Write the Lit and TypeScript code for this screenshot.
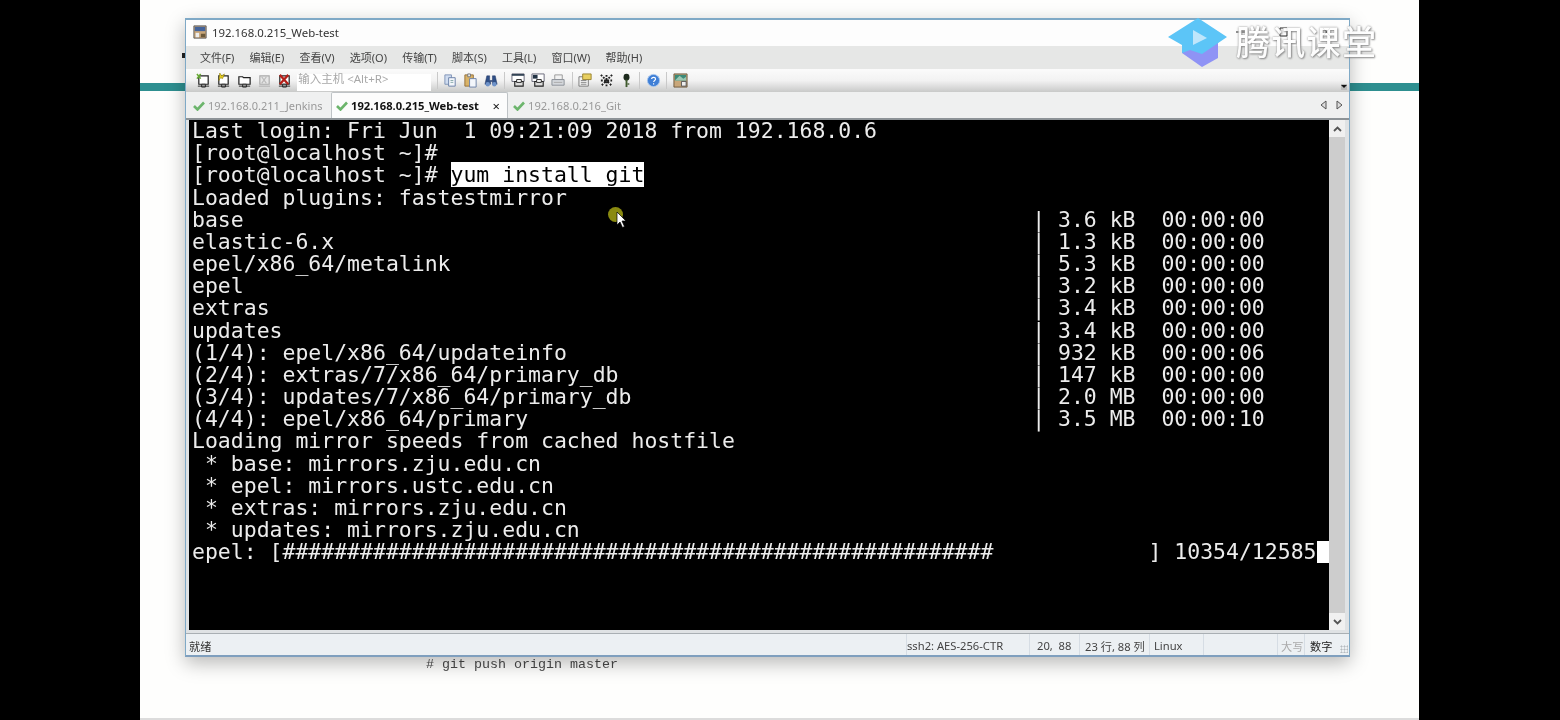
import { LitElement, html, css, svg } from "lit";
import { customElement } from "lit/decorators.js";

const ICONS: Record<string, unknown> = {
  connect: svg`<path d="M3 3h10v9H3z" fill="#fff" stroke="#222" stroke-width="1.3"/><path d="M1 1l4 5M5 1L1 6" stroke="#6a3" stroke-width="1.6"/><path d="M6 12h4v3H6z" fill="#ddd" stroke="#222"/><path d="M2 14h12" stroke="#222"/>`,
  quick: svg`<path d="M3 3h10v9H3z" fill="#fff" stroke="#222" stroke-width="1.3"/><path d="M4 0l2 3 3-2-2 5-2-1-2 3z" fill="#e8cf20" stroke="#8a7a10" stroke-width=".6"/><path d="M6 12h4v3H6z" fill="#ddd" stroke="#222"/><path d="M2 14h12" stroke="#222"/>`,
  folder: svg`<path d="M2 4h4l1 1h7v7H2z" fill="#fff" stroke="#222" stroke-width="1.3"/><path d="M6 12h4v3H6z" fill="#ddd" stroke="#222"/><path d="M2 14h12" stroke="#222"/>`,
  ghost: svg`<path d="M3 3h10v9H3z" fill="#e6e6e6" stroke="#aaa" stroke-width="1.2"/><path d="M5 4l5 7M10 4L5 11" stroke="#bbb" stroke-width="1.3"/><path d="M2 14h12" stroke="#aaa"/>`,
  close: svg`<path d="M3 3h10v9H3z" fill="#fff" stroke="#222" stroke-width="1.3"/><path d="M3 2l9 10M12 2L3 12" stroke="#b5201a" stroke-width="2.4"/><path d="M6 12h4v3H6z" fill="#ddd" stroke="#222"/><path d="M2 14h12" stroke="#222"/>`,
  copy: svg`<path d="M2 2h7v10H2z" fill="#cfdcf0" stroke="#7f93b5"/><path d="M6 5h7v9H6z" fill="#f3f6fb" stroke="#6a80a8"/><path d="M8 8h3M8 10h3" stroke="#8aa"/>`,
  paste: svg`<path d="M2 2h9v12H2z" fill="#d9b368" stroke="#94703a"/><path d="M5 1h3v3H5z" fill="#eee" stroke="#777"/><path d="M7 6h7v9H7z" fill="#f3f6fb" stroke="#6a80a8"/>`,
  find: svg`<path d="M3 3h3v5h3V3h3l2 9h-5V9H7v3H1z" fill="#2f4f86" stroke="#1d3260" stroke-width=".5"/><circle cx="4" cy="12" r="2.4" fill="#6f93c9"/><circle cx="11" cy="12" r="2.4" fill="#6f93c9"/>`,
  print1: svg`<path d="M1 1h13v8H1z" fill="#fff" stroke="#667"/><path d="M1 1h13v2H1z" fill="#345"/><path d="M4 9h9v5H4z" fill="#ddd" stroke="#222" stroke-width="1.2"/><path d="M6 7h5v3H6z" fill="#fff" stroke="#222"/>`,
  print2: svg`<path d="M1 1h13v8H1z" fill="#fff" stroke="#667"/><path d="M2 2h5v4H2z" fill="#234"/><path d="M4 9h9v5H4z" fill="#ddd" stroke="#222" stroke-width="1.2"/><path d="M6 7h5v3H6z" fill="#fff" stroke="#222"/>`,
  print3: svg`<path d="M4 2h8v5H4z" fill="#f2f2f2" stroke="#999"/><path d="M1 7h13v6H1z" fill="#d5d8dc" stroke="#8a8f96"/><path d="M3 10h9" stroke="#aaa"/>`,
  options: svg`<path d="M1 4h10v10H1z" fill="#f3f3f3" stroke="#777"/><path d="M5 1h9v6H5z" fill="#e8cf60" stroke="#9a8330"/><path d="M3 8h6M3 10h6M3 12h6" stroke="#888"/>`,
  map: svg`<path d="M2 2h12v12H2z" fill="#eee"/><path d="M2 2l12 12M14 2L2 14M8 2v12M2 8h12" stroke="#222" stroke-width="2" stroke-dasharray="2 1.4"/>`,
  key: svg`<ellipse cx="8" cy="4.5" rx="3.2" ry="3.6" fill="#1d2a1d"/><path d="M7 7h2v8H7z" fill="#3f5a2d"/><path d="M9 11h2v1.500H9z" fill="#3f5a2d"/>`,
  help: svg`<circle cx="8" cy="8" r="6.500" fill="#3f7fd6" stroke="#a9c8ef"/><path d="M6 6.500c0-2.500 4.200-2.500 4.200 0 0 1.500-2 1.500-2 3M8.100 11v1.200" stroke="#fff" stroke-width="1.200" fill="none"/>`,
  lock: svg`<path d="M1 1h14v14H1z" fill="#c9a77a" stroke="#6f5a3e"/><path d="M2 2h12v6H2z" fill="#3c8a78"/><path d="M2 8l5-5 4 3 3-2v4z" fill="#9cc7b2"/><path d="M9 9h5v5H9z" fill="#eee" stroke="#555"/>`,
};

const toolbarGroups = [
  ["copy", "paste", "find"],
  ["print1", "print2", "print3"],
  ["options", "map", "key"],
  ["help"],
  ["lock"],
];

const stats: [string, string, string][] = [
  ["base", "3.6 kB", "00:00:00"],
  ["elastic-6.x", "1.3 kB", "00:00:00"],
  ["epel/x86_64/metalink", "5.3 kB", "00:00:00"],
  ["epel", "3.2 kB", "00:00:00"],
  ["extras", "3.4 kB", "00:00:00"],
  ["updates", "3.4 kB", "00:00:00"],
  ["(1/4): epel/x86_64/updateinfo", "932 kB", "00:00:06"],
  ["(2/4): extras/7/x86_64/primary_db", "147 kB", "00:00:00"],
  ["(3/4): updates/7/x86_64/primary_db", "2.0 MB", "00:00:00"],
  ["(4/4): epel/x86_64/primary", "3.5 MB", "00:00:10"],
];

const menus = ["文件(F)", "编辑(E)", "查看(V)", "选项(O)", "传输(T)", "脚本(S)", "工具(L)", "窗口(W)", "帮助(H)"];

const check = svg`<path d="M1 6l3.500 3.500L11 2.500" fill="none" stroke="#6cb56c" stroke-width="2.600"/>`;

@customElement("app-root")
export class AppRoot extends LitElement {
  static styles = css`
    :host { display: block; width: 1560px; height: 720px; background: #000; overflow: hidden; }
    .page { position: relative; width: 1279px; height: 720px; margin-left: 140px; background: #fefefd; overflow: hidden; filter: blur(0.4px); }
    .teal { position: absolute; left: 0; right: 0; top: 83px; height: 8px; background: #2e8f90; }
    .tick { position: absolute; left: 42px; top: 53px; width: 3px; height: 5px; background: #222; }
    .baseline { position: absolute; left: 0; right: 0; bottom: 0; height: 2px; background: #dcdcdc; }
    .note { position: absolute; left: 286px; top: 657px; font: 13.340px/15px "Liberation Mono", monospace; color: #4a4a4a; white-space: pre; }
    .window { position: absolute; left: 45px; top: 18px; width: 1165px; height: 639px; box-sizing: border-box; border: 1px solid #7fa9c6; border-top-width: 2px; border-bottom: 2px solid #7f9fbe; background: #eef0f1; box-shadow: 0 6px 18px rgba(0,0,0,.28); display: flex; flex-direction: column; font-family: "Noto Sans", "Noto Sans CJK SC", sans-serif; color: #333; }
    .title { height: 26px; flex: none; background: #fdfdfd; display: flex; align-items: center; gap: 5px; padding: 0 18px 2px 7px; box-sizing: border-box; font-size: 11.400px; color: #333; }
    .title svg { width: 14px; height: 14px; flex: none; }
    .controls { margin-left: auto; display: flex; gap: 34px; align-items: center; }
    .controls svg { width: 9px; height: 10px; display: block; }
    .menu { height: 23px; flex: none; background: #e6e7e6; display: flex; align-items: center; gap: 15.200px; padding: 0 0 2px 14px; box-sizing: border-box; font-size: 11px; color: #444; }
    .toolbar { height: 23px; flex: none; background: linear-gradient(#fbfbfb 0%, #f2f2f2 50%, #c9cac9 100%); display: flex; align-items: center; padding-left: 10px; position: relative; }
    .tool { width: 15px; height: 15px; flex: none; display: block; }
    .tools { display: flex; gap: 5.300px; }
    .input { width: 134px; height: 17px; margin-left: 5px; margin-top: 3px; background: #fff; font-size: 11.500px; line-height: 9px; color: #a8a8a8; padding-left: 1px; box-sizing: border-box; white-space: nowrap; }
    .sep { width: 1px; height: 17px; background: #c9c9c9; margin: 0 5.500px; flex: none; }
    .chevron { position: absolute; right: 2px; bottom: 2px; width: 6px; height: 6px; background: #bbb; }
    .chevron::after { content: ""; position: absolute; left: 0; top: 1px; border: 3px solid transparent; border-top-color: #111; border-bottom-width: 0; }
    .tabs { height: 28px; flex: none; background: #eff0f0; display: flex; align-items: flex-end; padding-left: 3px; font-size: 11.200px; color: #999; position: relative; box-sizing: border-box; border-bottom: 2px solid #8d9397; }
    .tab { height: 26px; display: flex; align-items: center; gap: 3px; padding: 0 6px 0 5px; box-sizing: border-box; white-space: nowrap; }
    .tab svg { width: 12px; height: 11px; flex: none; }
    .tab.first { width: 142px; font-size: 11px; padding-left: 4px; }
    .tab.active { background: #fcfcfc; border: 1px solid #bfc3c6; border-bottom: 0; border-radius: 2px 2px 0 0; color: #111; font-weight: 700; width: 177px; padding: 0 7px 0 4px; }
    .tab .x { margin-left: auto; font-weight: 400; font-size: 13px; color: #111; }
    .arrows { position: absolute; right: 6px; top: 8px; display: flex; gap: 9px; }
    .arrows svg { width: 7px; height: 10px; display: block; }
    .body { flex: 1; min-height: 0; display: flex; background: #dfe2e4; padding: 0 4px 3px 3px; box-sizing: border-box; }
    .term { flex: 1; background: #000; color: #ececec; font: 21.480px/22.180px "DejaVu Sans Mono", monospace; padding: 0 0 0 3px; min-width: 0; }
    .line { height: 22.180px; white-space: pre; }
    .sel { background: #fff; color: #000; }
    .cursor { display: inline-block; width: 13px; height: 22px; background: #fff; vertical-align: top; }
    .scroll { width: 16px; flex: none; display: flex; flex-direction: column; background: #f0f0f0; }
    .scroll .btn { height: 17px; flex: none; display: flex; align-items: center; justify-content: center; }
    .scroll .btn svg { width: 9px; height: 6px; }
    .scroll .thumb { flex: 1; background: #cdcdcd; }
    .status { height: 22px; flex: none; background: #ecf0f3; border-top: 1px solid #a9afb3; display: flex; align-items: center; font-size: 11.200px; color: #444; box-sizing: border-box; }
    .cell { height: 100%; display: flex; align-items: center; padding-top: 2px; box-sizing: border-box; border-right: 1px solid #d6dde4; white-space: pre; flex: none; }
    .ready { width: 721px; padding-left: 3px; color: #333; }
    .enc { width: 123px; }
    .pos { width: 50px; padding-left: 7px; }
    .size { width: 70px; padding-left: 5px; }
    .os { width: 54px; padding-left: 4px; }
    .blank { width: 74px; }
    .caps { width: 27px; padding-left: 3px; color: #aaa; }
    .num { padding-left: 5px; border: 0; color: #222; }
    .grip { margin-left: auto; width: 8px; height: 8px; align-self: flex-end; margin-bottom: 2px; margin-right: 1px; background-image: radial-gradient(#b5bbc0 45%, transparent 50%); background-size: 3px 3px; }
    .logo { position: absolute; left: 1026px; top: 15px; width: 64px; height: 54px; display: block; }
    .brand { position: absolute; left: 1096px; top: 18px; font: 500 34px/46px "Noto Sans CJK SC", sans-serif; letter-spacing: 1.300px; color: #fff; text-shadow: 0 0 2px #777, 1px 1px 2px #888; opacity: .9; }
    .dot { position: absolute; left: 468px; top: 207px; width: 15px; height: 15px; border-radius: 50%; background: #8a8a10; }
    .pointer { position: absolute; left: 476px; top: 211px; width: 11px; height: 18px; display: block; }
  `;

  private icon(name: string) {
    return html`<svg class="tool" viewBox="0 0 16 16">${ICONS[name]}</svg>`;
  }

  private terminal() {
    const rows = stats.map(([l, s, t]) => `${l.padEnd(65)}| ${s}  ${t}`);
    const before = ["Last login: Fri Jun  1 09:21:09 2018 from 192.168.0.6", "[root@localhost ~]#"];
    const after = [
      "Loaded plugins: fastestmirror",
      ...rows,
      "Loading mirror speeds from cached hostfile",
      " * base: mirrors.zju.edu.cn",
      " * epel: mirrors.ustc.edu.cn",
      " * extras: mirrors.zju.edu.cn",
      " * updates: mirrors.zju.edu.cn",
    ];
    const bar = `epel: [${"#".repeat(55)}${" ".repeat(12)}] 10354/12585`;
    return html`<div class="term">
      ${before.map((l) => html`<div class="line">${l}</div>`)}
      <div class="line">[root@localhost ~]# <span class="sel">yum install git</span></div>
      ${after.map((l) => html`<div class="line">${l}</div>`)}
      <div class="line">${bar}<span class="cursor"></span></div>
    </div>`;
  }

  render() {
    return html`
      <div class="page">
        <div class="teal"></div>
        <div class="tick"></div>
        <div class="baseline"></div>
        <div class="note"># git push origin master</div>
        <div class="window">
          <div class="title">
            <svg viewBox="0 0 16 16"><path d="M1 1h14v14H1z" fill="#c9a77a" stroke="#555"/><path d="M2 2h12v5H2z" fill="#44639a"/><path d="M3 9h4v5H3z" fill="#eee"/><path d="M9 10h5v4H9z" fill="#6d5a3a"/></svg>
            <span>192.168.0.215_Web-test</span>
            <div class="controls">
              <svg viewBox="0 0 9 10"><path d="M0 5h9" stroke="#222"/></svg>
              <svg viewBox="0 0 9 10"><path d="M1 1h7v8H1z" fill="none" stroke="#222"/></svg>
              <svg viewBox="0 0 9 10"><path d="M1 1l7 8M8 1L1 9" stroke="#222"/></svg>
            </div>
          </div>
          <div class="menu">${menus.map((m) => html`<span>${m}</span>`)}</div>
          <div class="toolbar">
            <div class="tools">${["connect", "quick", "folder", "ghost", "close"].map((n) => this.icon(n))}</div>
            <div class="input">输入主机 &lt;Alt+R&gt;</div>
            ${toolbarGroups.map((g) => html`<div class="sep"></div><div class="tools">${g.map((n) => this.icon(n))}</div>`)}
            <div class="chevron"></div>
          </div>
          <div class="tabs">
            <div class="tab first"><svg viewBox="0 0 12 11">${check}</svg>192.168.0.211_Jenkins</div>
            <div class="tab active"><svg viewBox="0 0 12 11">${check}</svg>192.168.0.215_Web-test<span class="x">×</span></div>
            <div class="tab"><svg viewBox="0 0 12 11">${check}</svg>192.168.0.216_Git</div>
            <div class="arrows">
              <svg viewBox="0 0 7 10"><path d="M6 1L1 5l5 4z" fill="#ddd" stroke="#555"/></svg>
              <svg viewBox="0 0 7 10"><path d="M1 1l5 4-5 4z" fill="#ddd" stroke="#555"/></svg>
            </div>
          </div>
          <div class="body">
            ${this.terminal()}
            <div class="scroll">
              <div class="btn"><svg viewBox="0 0 9 6"><path d="M1 5l3.500-3.500L8 5" fill="none" stroke="#555" stroke-width="1.800"/></svg></div>
              <div class="thumb"></div>
              <div class="btn"><svg viewBox="0 0 9 6"><path d="M1 1l3.500 3.500L8 1" fill="none" stroke="#555" stroke-width="1.800"/></svg></div>
            </div>
          </div>
          <div class="status">
            <div class="cell ready">就绪</div>
            <div class="cell enc">ssh2: AES-256-CTR</div>
            <div class="cell pos">20,  88</div>
            <div class="cell size">23 行, 88 列</div>
            <div class="cell os">Linux</div>
            <div class="cell blank"></div>
            <div class="cell caps">大写</div>
            <div class="cell num">数字</div>
            <div class="grip"></div>
          </div>
        </div>
        <svg class="logo" viewBox="0 0 64 54">
          <path d="M16 30v8l20 14 16-9V28z" fill="#8f93f5"/>
          <path d="M32 3l29 19-25 17-12-4-8 3v-8L2 22z" fill="#5cc5f7"/>
          <path d="M27 15l14 8-14 7z" fill="#bfe6fb"/>
        </svg>
        <div class="brand">腾讯课堂</div>
        <div class="dot"></div>
        <svg class="pointer" viewBox="0 0 11 18"><path d="M1 1v13l3-3 2.500 5.500 2-1L6 10h4z" fill="#fff" stroke="#000" stroke-width=".7"/></svg>
      </div>
    `;
  }
}
